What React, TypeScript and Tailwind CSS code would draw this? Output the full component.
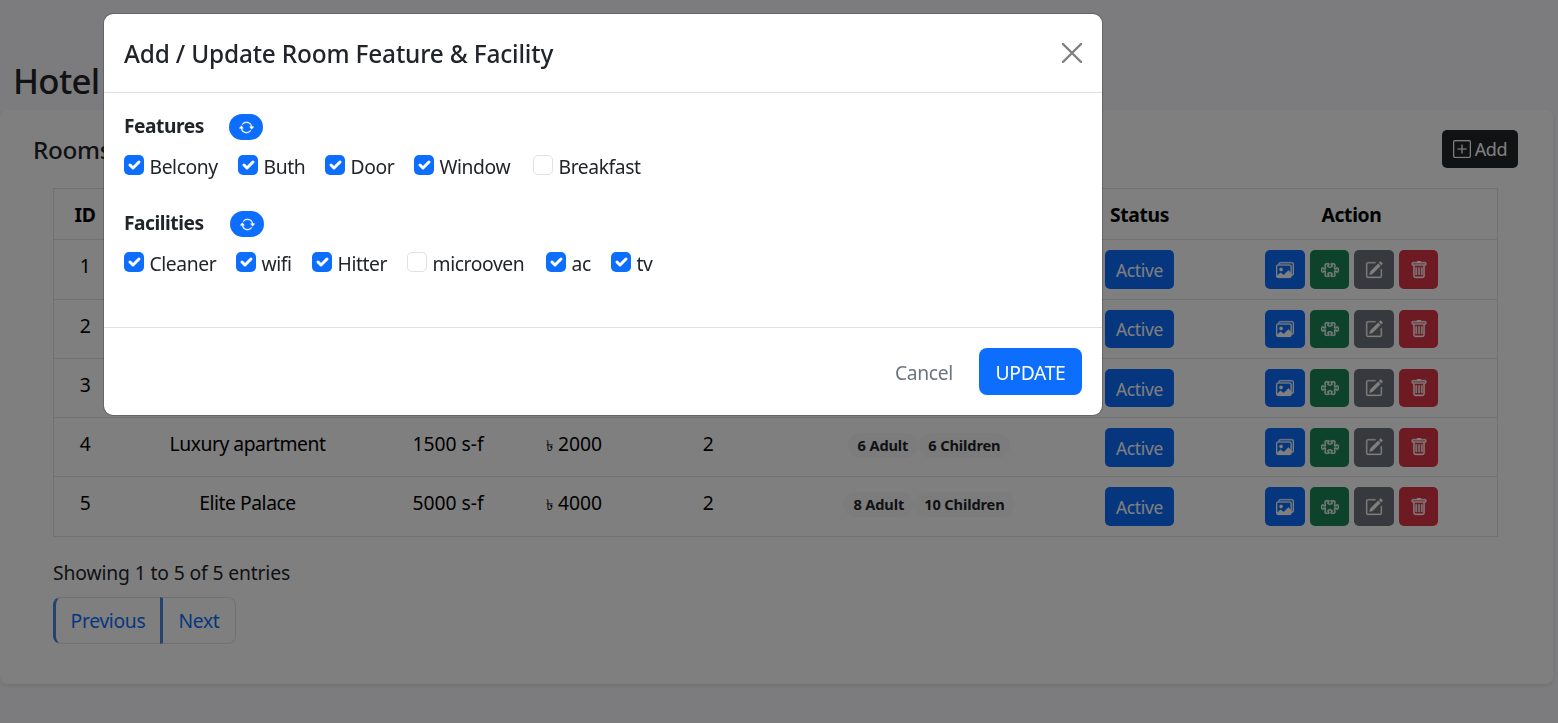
import React from "react";
import {
  BsArrowRepeat,
  BsImages,
  BsPencilSquare,
  BsPlusSquare,
  BsPuzzle,
  BsTrash,
} from "react-icons/bs";

type Room = {
  id: number;
  name?: string;
  area?: string;
  price?: string;
  quantity?: string;
  adults?: string;
  children?: string;
};

const rooms: Room[] = [
  { id: 1 },
  { id: 2 },
  { id: 3 },
  { id: 4, name: "Luxury apartment", area: "1500 s-f", price: "2000", quantity: "2", adults: "6 Adult", children: "6 Children" },
  { id: 5, name: "Elite Palace", area: "5000 s-f", price: "4000", quantity: "2", adults: "8 Adult", children: "10 Children" },
];

const features = [
  { label: "Belcony", checked: true, width: "w-[94px]" },
  { label: "Buth", checked: true, width: "w-[67px]" },
  { label: "Door", checked: true, width: "w-[69px]" },
  { label: "Window", checked: true, width: "w-[99px]" },
  { label: "Breakfast", checked: false, width: "w-[107px]" },
];

const facilities = [
  { label: "Cleaner", checked: true, width: "w-[92px]" },
  { label: "wifi", checked: true, width: "w-[56px]" },
  { label: "Hitter", checked: true, width: "w-[75px]" },
  { label: "microoven", checked: false, width: "w-[119px]" },
  { label: "ac", checked: true, width: "w-[45px]" },
  { label: "tv", checked: true, width: "w-[42px]" },
];

const columns = "grid grid-cols-[62px_263px_138px_114px_154px_288px_133px_291px]";

function Checkbox({ checked }: { checked: boolean }) {
  return checked ? (
    <span className="block size-5 shrink-0 rounded-[5px] bg-[#0d6efd]">
      <svg viewBox="0 0 20 20" className="size-5">
        <path d="m6 10 3 3 6-6" fill="none" stroke="#fff" strokeWidth="3" strokeLinecap="round" strokeLinejoin="round" />
      </svg>
    </span>
  ) : (
    <span className="block size-5 shrink-0 rounded-[5px] border border-[#dee2e6] bg-white" />
  );
}

function OptionGroup({ title, titleWidth, options }: { title: string; titleWidth: string; options: typeof features }) {
  return (
    <section>
      <div className="flex h-[30px] items-center gap-[25px]">
        <h2 className={`${titleWidth} text-[19.2px] leading-[28px] font-bold tracking-[-0.46px]`}>
          <span className="block h-[30px] whitespace-nowrap">{title}</span>
        </h2>
        <button className="flex h-[26px] w-[34px] items-center justify-center rounded-full bg-[#0d6efd] text-white">
          <BsArrowRepeat size={15} strokeWidth={0.3} />
        </button>
      </div>
      <div className="mt-[9px] flex h-[30px] gap-5">
        {options.map((o) => (
          <label key={o.label} className={`flex gap-[5.5px] whitespace-nowrap ${o.width}`}>
            <span className="pt-[4px]">
              <Checkbox checked={o.checked} />
            </span>
            <span className="leading-[31px] tracking-[-0.4px]">{o.label}</span>
          </label>
        ))}
      </div>
    </section>
  );
}

const actionClass = "flex h-[38.5px] w-[39.5px] items-center justify-center rounded-[5px] pl-px text-white";

function RoomRow({ room }: { room: Room }) {
  return (
    <div className={`${columns} h-[59.25px] border-t border-[#dee2e6] pt-[10px] text-center leading-[32px] text-black`}>
      <span>{room.id}</span>
      <span className="tracking-[-0.46px]">{room.name}</span>
      <span className="tracking-[0px]">{room.area}</span>
      <span className="flex h-[32px] justify-center gap-[5px] tracking-[0px]">
        {room.price && (
          <>
            <span className="text-[15px] leading-[34px]">৳</span>
            <span>{room.price}</span>
          </>
        )}
      </span>
      <span>{room.quantity}</span>
      <span className="flex h-[34px] items-center justify-center tracking-[-0.12px]">
        {room.adults && (
          <>
            <span className="rounded-full bg-[#f8f9fa] px-[10px] py-[5px] text-[14.6px] leading-[15px] font-bold text-[#212529]">
              {room.adults}
            </span>
            <span className="rounded-full bg-[#f8f9fa] px-[10px] py-[5px] text-[14.6px] leading-[15px] font-bold text-[#212529]">
              {room.children}
            </span>
          </>
        )}
      </span>
      <span className="flex justify-center">
        <button className="flex h-[38.5px] w-[69px] items-center justify-center rounded-[5px] bg-[#0d6efd] pt-px text-[17.4px] text-white">
          Active
        </button>
      </span>
      <span className="flex justify-center gap-[5px]">
        <button className={`${actionClass} bg-[#0d6efd]`}><BsImages size={18} strokeWidth={0.25} /></button>
        <button className={`${actionClass} bg-[#198754]`}><BsPuzzle size={18} strokeWidth={0.25} /></button>
        <button className={`${actionClass} bg-[#6c757d]`}><BsPencilSquare size={18} strokeWidth={0.25} /></button>
        <button className={`${actionClass} bg-[#dc3545]`}><BsTrash size={18} strokeWidth={0.35} /></button>
      </span>
    </div>
  );
}

export default function App() {
  return (
    <div className="h-[723px] w-[1558px] overflow-hidden bg-[#f9f9fd] font-['Noto_Sans',sans-serif] text-[19.3px] tracking-[-0.32px] text-[#212529]">
      <main className="pt-[60px]">
        <h1 className="h-[50px] pl-[13px] text-[34.8px] leading-[41px] font-medium tracking-[-0.7px]">Hotel</h1>
        <section className="h-[574px] w-[1553px] rounded-[8px] bg-white pt-5 shadow-[0_2px_5px_rgba(0,0,0,0.09)]">
          <div className="flex h-[38px] items-center justify-between pr-[35px] pl-[33px]">
            <h2 className="pt-[3px] text-[24.3px] font-medium">Rooms</h2>
            <button className="flex h-[38px] w-[76px] items-center justify-center gap-1 rounded-[5px] bg-[#212529] text-[18px] text-white">
              <BsPlusSquare size={18} strokeWidth={0.2} />
              <span className="pt-px">Add</span>
            </button>
          </div>
          <div className="mt-5 ml-[53px] w-[1445px] border border-[#dee2e6]">
            <div className={`${columns} h-[50.4px] items-center pt-[2px] text-center font-bold tracking-[-0.32px] text-black`}>
              <span>ID</span>
              <span className="col-start-7">Status</span>
              <span>Action</span>
            </div>
            {rooms.map((r) => (
              <RoomRow key={r.id} room={r} />
            ))}
          </div>
          <p className="mt-[21px] pl-[53px] leading-[30px] tracking-[-0.13px]">Showing 1 to 5 of 5 entries</p>
          <nav className="mt-[9px] ml-[53px] flex h-[47px] w-[183px] text-[#0d6efd]">
            <button className="w-[107px] rounded-l-[8px] border border-r-0 border-l-[3px] border-[#dee2e6] border-l-[#4a86dc] pt-[2px]">Previous</button>
            <button className="w-[76px] rounded-r-[8px] border border-l-[3px] border-[#dee2e6] border-l-[#4a86dc] pt-[2px]">Next</button>
          </nav>
        </section>
      </main>

      <div className="fixed inset-0 bg-black/50">
        <div role="dialog" className="mt-[13px] ml-[103px] h-[403px] w-[1000px] rounded-[10px] border border-black/20 bg-white bg-clip-padding">
          <header className="flex h-[79px] items-center justify-between border-b border-[#dee2e6] px-5">
            <h1 className="pt-[3px] text-[24.4px] font-medium tracking-[-0.18px]">Add / Update Room Feature &amp; Facility</h1>
            <button aria-label="Close">
              <svg viewBox="0 0 20 20" className="size-5">
                <path d="m1 1 18 18M19 1 1 19" fill="none" stroke="#7f7f7f" strokeWidth="2.4" strokeLinecap="round" />
              </svg>
            </button>
          </header>
          <div className="flex h-[234px] flex-col gap-7 px-5 pt-[19px]">
            <OptionGroup title="Features" titleWidth="w-[80px]" options={features} />
            <OptionGroup title="Facilities" titleWidth="w-[81px]" options={facilities} />
          </div>
          <footer className="flex h-[88px] items-center justify-end gap-[26px] border-t border-[#dee2e6] px-5">
            <button className="pt-[3px] text-[#6c757d]">Cancel</button>
            <button className="h-[47px] w-[103px] rounded-[8px] bg-[#0d6efd] pt-[3px] text-white">UPDATE</button>
          </footer>
        </div>
      </div>
    </div>
  );
}
